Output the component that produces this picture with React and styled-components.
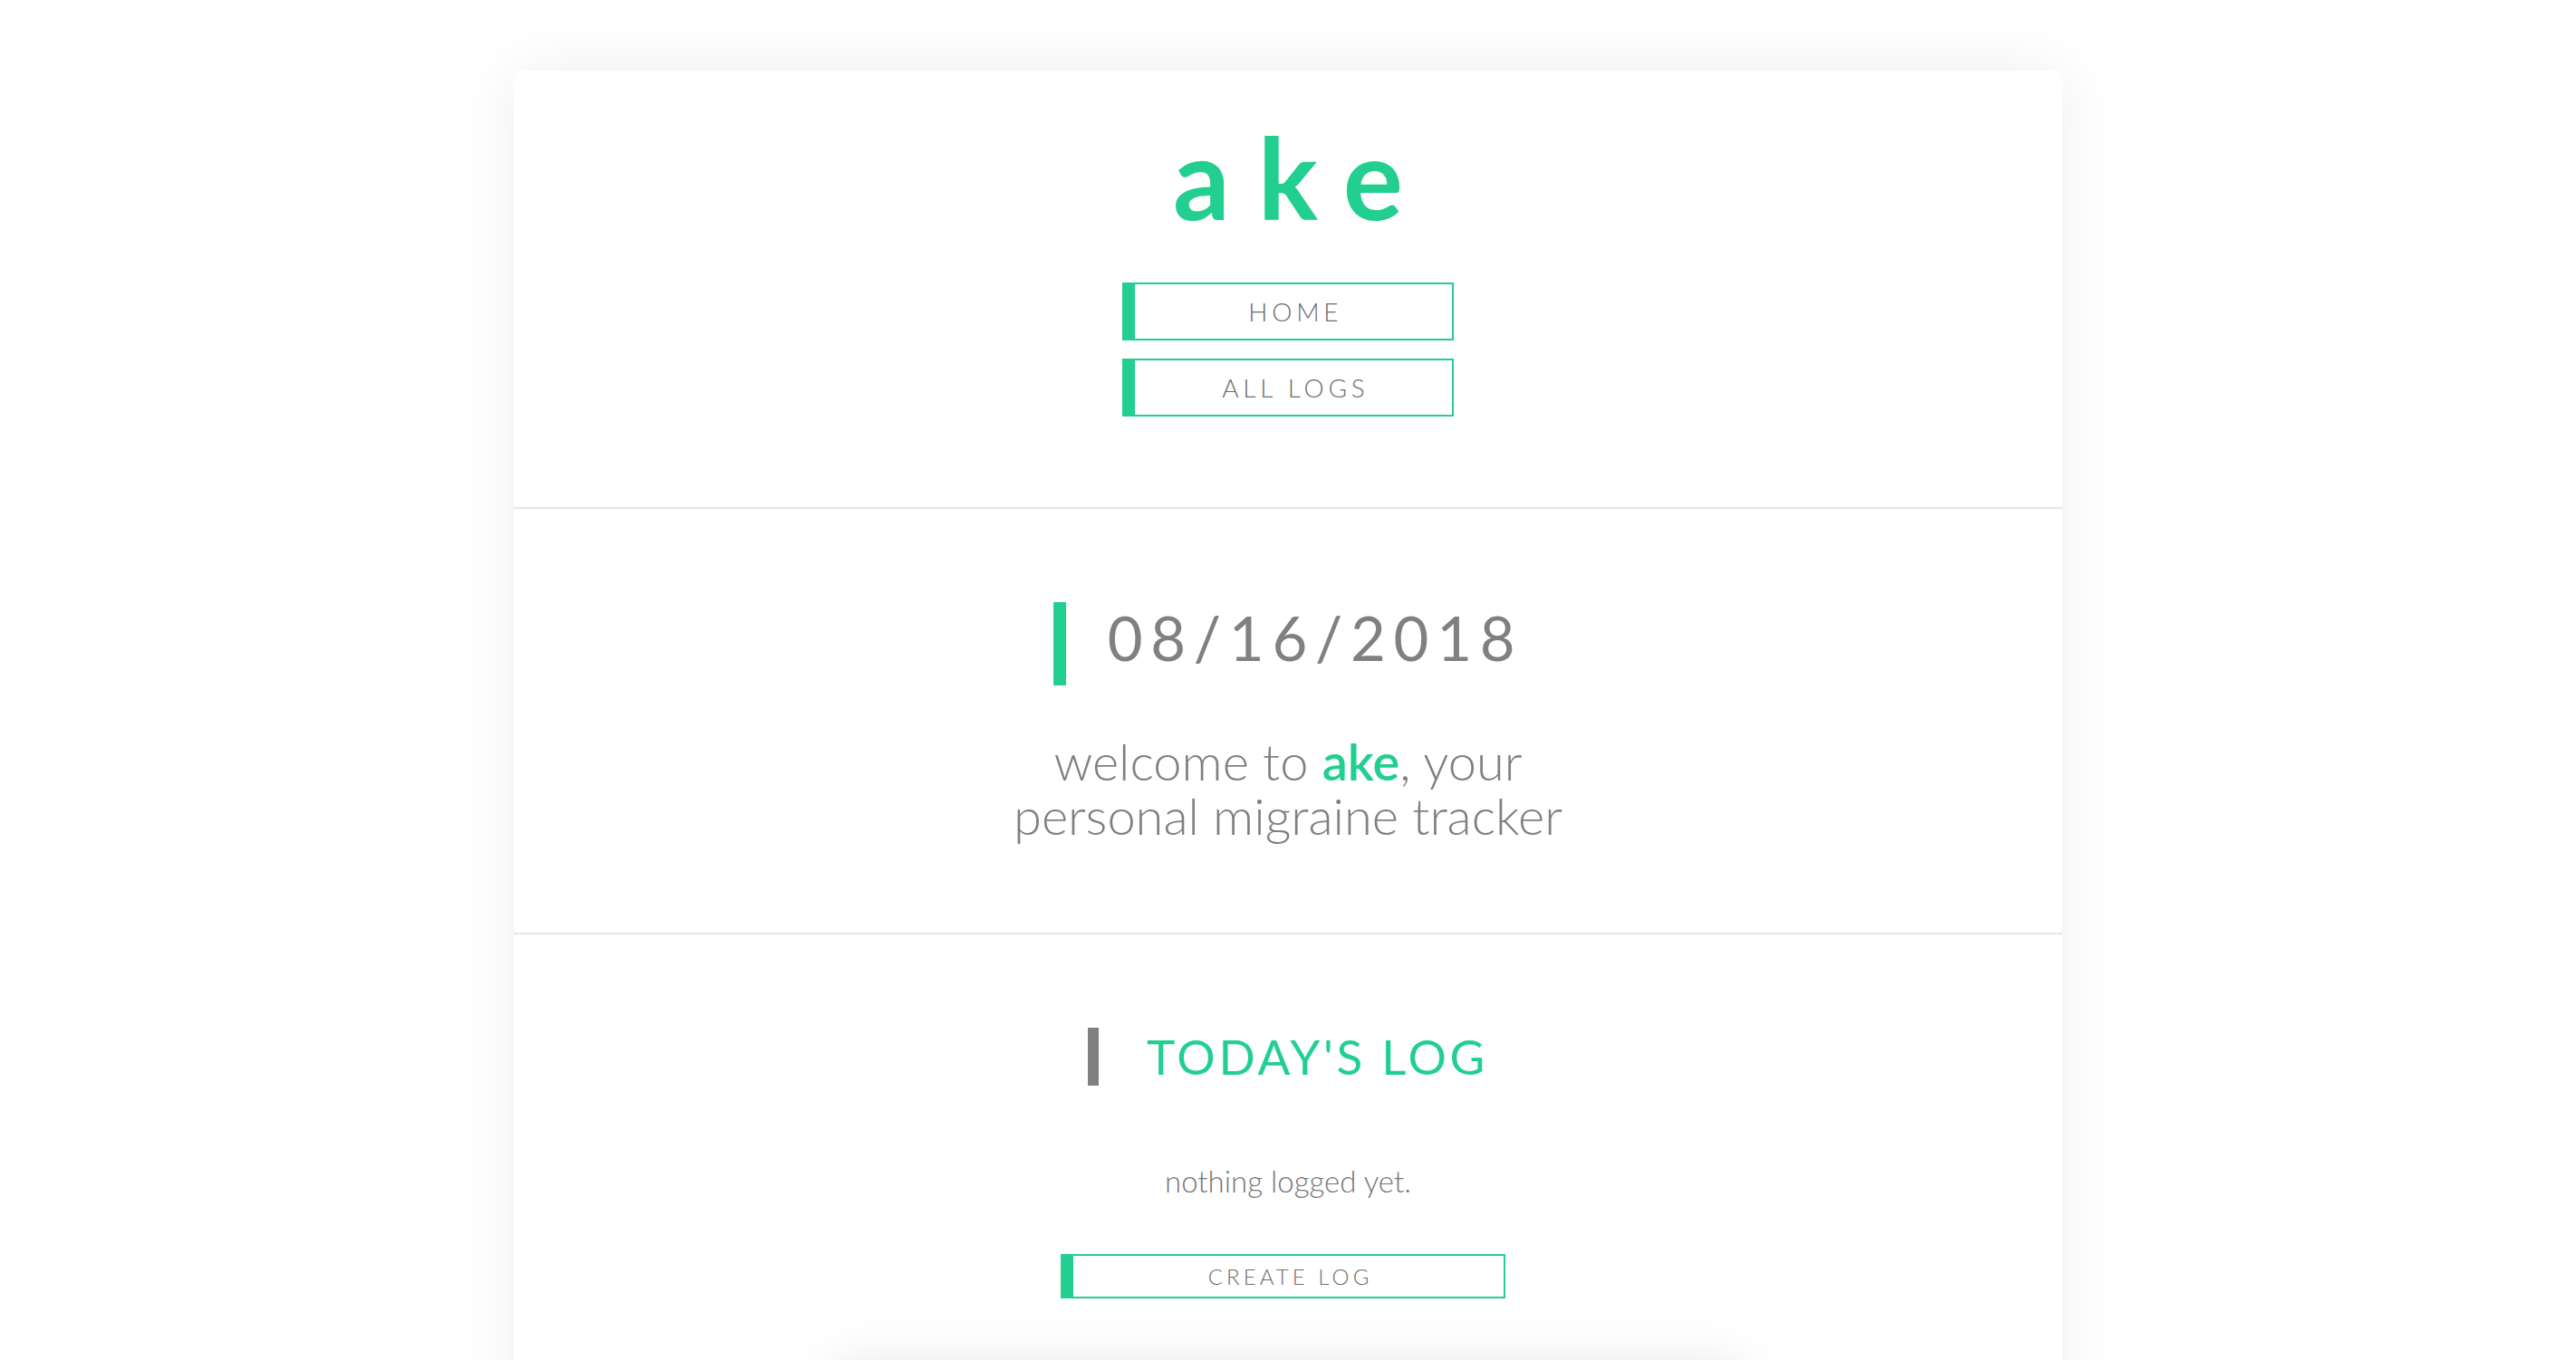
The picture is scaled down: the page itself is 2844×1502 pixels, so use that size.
import React from "react";
import styled, { createGlobalStyle } from "styled-components";

const GREEN = "#22cf91";
const GRAY = "#808080";

const Global = createGlobalStyle`
  html, body { margin: 0; padding: 0; background: #ffffff; }
  body { font-family: Lato, "Open Sans", "Liberation Sans", sans-serif; color: ${GRAY}; }
  * { box-sizing: border-box; }
`;

const Page = styled.div`
  display: flex;
  justify-content: center;
  padding-top: 78px;
`;

const Card = styled.main`
  width: 1710px;
  background: #fff;
  border-radius: 10px;
  box-shadow: 0 0 70px rgba(0, 0, 0, 0.07);
  display: flex;
  flex-direction: column;
`;

const Section = styled.section`
  display: flex;
  flex-direction: column;
  align-items: center;
  padding: ${(p) => p.$pad};
  border-bottom: ${(p) => (p.$divider ? "2px solid #e6e6e6" : "none")};
`;

const Logo = styled.h1`
  margin: 0 0 55px;
  font-family: Lato, sans-serif;
  font-weight: 700;
  font-size: 124px;
  line-height: 124px;
  color: ${GREEN};
  letter-spacing: 0.25em;
  padding-left: 0.25em;
`;

const Nav = styled.nav`
  display: flex;
  flex-direction: column;
  gap: 20px;
`;

const OutlineButton = styled.button`
  width: ${(p) => p.$w}px;
  height: ${(p) => p.$h}px;
  margin-left: ${(p) => p.$shift || 0}px;
  background: #fff;
  border: 2px solid ${GREEN};
  border-left: 14px solid ${GREEN};
  border-radius: 0;
  font-family: Lato, sans-serif;
  font-weight: 300;
  font-size: ${(p) => p.$fs}px;
  letter-spacing: 0.17em;
  text-indent: 0.17em;
  color: #6e6e6e;
  text-transform: uppercase;
  display: flex;
  align-items: center;
  justify-content: center;
  padding: 0;
  cursor: pointer;
`;

const DateHeading = styled.h2`
  margin: 0 0 54px;
  border-left: 14px solid ${GREEN};
  padding: 0 0 14px 46px;
  font-family: Lato, sans-serif;
  font-weight: 400;
  font-size: 67px;
  line-height: 78px;
  letter-spacing: 0.13em;
  color: ${GRAY};
`;

const Welcome = styled.p`
  margin: 0;
  text-align: center;
  font-family: Lato, sans-serif;
  font-weight: 300;
  font-size: 56px;
  color: ${GRAY};
`;

const WelcomeLine = styled.span`
  display: block;
  height: 60px;
  line-height: 60px;
`;

const Brand = styled.span`
  color: ${GREEN};
  font-weight: 600;
`;

const LogHeading = styled.h2`
  margin: 0 0 85px;
  border-left: 12px solid ${GRAY};
  padding-left: 53px;
  font-family: Lato, sans-serif;
  font-weight: 400;
  font-size: 53px;
  line-height: 64px;
  letter-spacing: 0.07em;
  color: ${GREEN};
  text-transform: uppercase;
`;

const Empty = styled.p`
  margin: 0 0 61px;
  font-family: Lato, sans-serif;
  font-weight: 300;
  font-size: 33px;
  line-height: 40px;
  color: #767676;
`;

const FormPanel = styled.div`
  margin-top: 78px;
  width: 1000px;
  height: 500px;
  background: #fff;
  box-shadow: 0 0 60px rgba(0, 0, 0, 0.12);
`;

export default function App() {
  return (
    <>
      <Global />
      <Page>
        <Card>
          <Section $pad="55px 0 100px" $divider>
            <Logo>ake</Logo>
            <Nav>
              <OutlineButton $w={366} $h={64} $fs={28}>Home</OutlineButton>
              <OutlineButton $w={366} $h={64} $fs={28}>All Logs</OutlineButton>
            </Nav>
          </Section>
          <Section $pad="103px 0 99px" $divider>
            <DateHeading>08/16/2018</DateHeading>
            <Welcome>
              <WelcomeLine>
                welcome to <Brand>ake</Brand>, your
              </WelcomeLine>
              <WelcomeLine>personal migraine tracker</WelcomeLine>
            </Welcome>
          </Section>
          <Section $pad="103px 0 200px">
            <LogHeading>Today's Log</LogHeading>
            <Empty>nothing logged yet.</Empty>
            <OutlineButton $w={491} $h={49} $fs={24} $shift={-11}>
              Create Log
            </OutlineButton>
            <FormPanel />
          </Section>
        </Card>
      </Page>
    </>
  );
}
